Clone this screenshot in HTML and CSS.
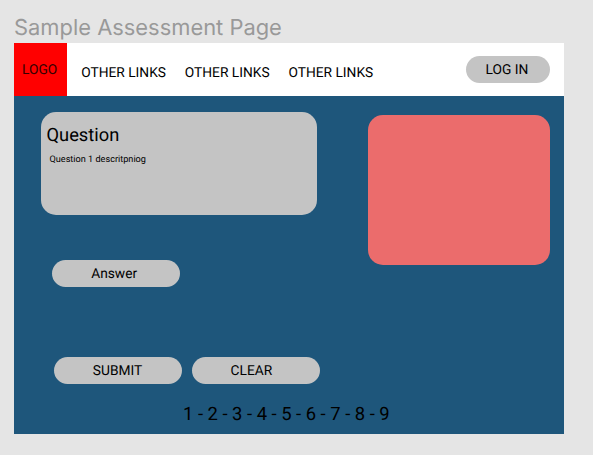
FILE: index.html
```html
<!DOCTYPE html>
<html lang="en">
<head>
<meta charset="utf-8">
<title>Sample Assessment Page</title>
<link rel="stylesheet" href="styles.css">
</head>
<body>
<h1 class="frame-title">Sample Assessment Page</h1>
<div class="frame">
  <header class="topbar">
    <div class="logo">LOGO</div>
    <nav class="links"><a>OTHER LINKS</a><a>OTHER LINKS</a><a>OTHER LINKS</a></nav>
    <button class="pill login">LOG IN</button>
  </header>
  <main class="content">
    <div class="main-col">
      <section class="question">
        <h2>Question</h2>
        <p>Question 1 descritpniog</p>
      </section>
      <button class="pill answer">Answer</button>
      <div class="actions">
        <button class="pill submit">SUBMIT</button>
        <button class="pill clear">CLEAR</button>
      </div>
    </div>
    <aside class="panel"></aside>
  </main>
  <footer class="pages">1 - 2 - 3 - 4 - 5 - 6 - 7 - 8 - 9</footer>
</div>
</body>
</html>
```
FILE: styles.css
```css
* { box-sizing: border-box; }
body {
  margin: 0;
  height: 455px;
  padding: 13px 29px 0 14px;
  overflow: hidden;
  background: #e5e5e5;
  color: #000;
  font-family: Roboto, sans-serif;
  text-rendering: geometricPrecision;
}
.frame-title {
  margin: 0;
  height: 30px;
  font: 400 21.9px/30px Inter, sans-serif;
  color: #999;
  white-space: nowrap;
}
.frame {
  width: 550px;
  height: 391px;
  background: #1e567b;
  display: flex;
  flex-direction: column;
}
.topbar {
  height: 53px;
  background: #fff;
  display: flex;
  font-size: 13.75px;
}
.logo {
  width: 53px;
  height: 53px;
  background: #f00;
  color: #300;
  padding-left: 8px;
  line-height: 54px;
}
.links {
  display: flex;
  gap: 18.9px;
  padding-left: 14.2px;
  line-height: 60px;
  white-space: nowrap;
}
.pill {
  width: 127.5px;
  height: 27px;
  padding: 2px 0 0;
  border: 0;
  border-radius: 14px;
  background: #c4c4c4;
  color: #000;
  font: 400 13.75px/25px Roboto, sans-serif;
  text-rendering: geometricPrecision;
}
.login {
  width: 84px;
  margin: 13px 14px 0 auto;
  padding-right: 2px;
}
.content {
  display: flex;
  justify-content: space-between;
  padding: 16px 14px 0 26.5px;
  height: 302px;
}
.main-col {
  width: 280px;
}
.question {
  width: 276.5px;
  height: 103px;
  border-radius: 15px;
  background: #c4c4c4;
  padding: 13px 6px;
}
.question h2 {
  margin: 0;
  font-size: 18.3px;
  font-weight: 400;
  line-height: 22px;
}
.question p {
  margin: 7px 0 0 3px;
  font-size: 9.15px;
  line-height: 12px;
}
.answer {
  display: block;
  margin: 45px 0 70px 11.9px;
  padding-right: 4px;
}
.actions {
  display: flex;
  gap: 10.3px;
  padding-left: 13.8px;
}
.submit {
  padding-right: 1px;
}
.clear {
  padding-right: 9px;
}
.panel {
  width: 182.5px;
  height: 150px;
  margin-top: 3.4px;
  border-radius: 15px;
  background: #eb6c6c;
}
.pages {
  padding-left: 169px;
  font-size: 18.4px;
  line-height: 34px;
  white-space: nowrap;
}
```
